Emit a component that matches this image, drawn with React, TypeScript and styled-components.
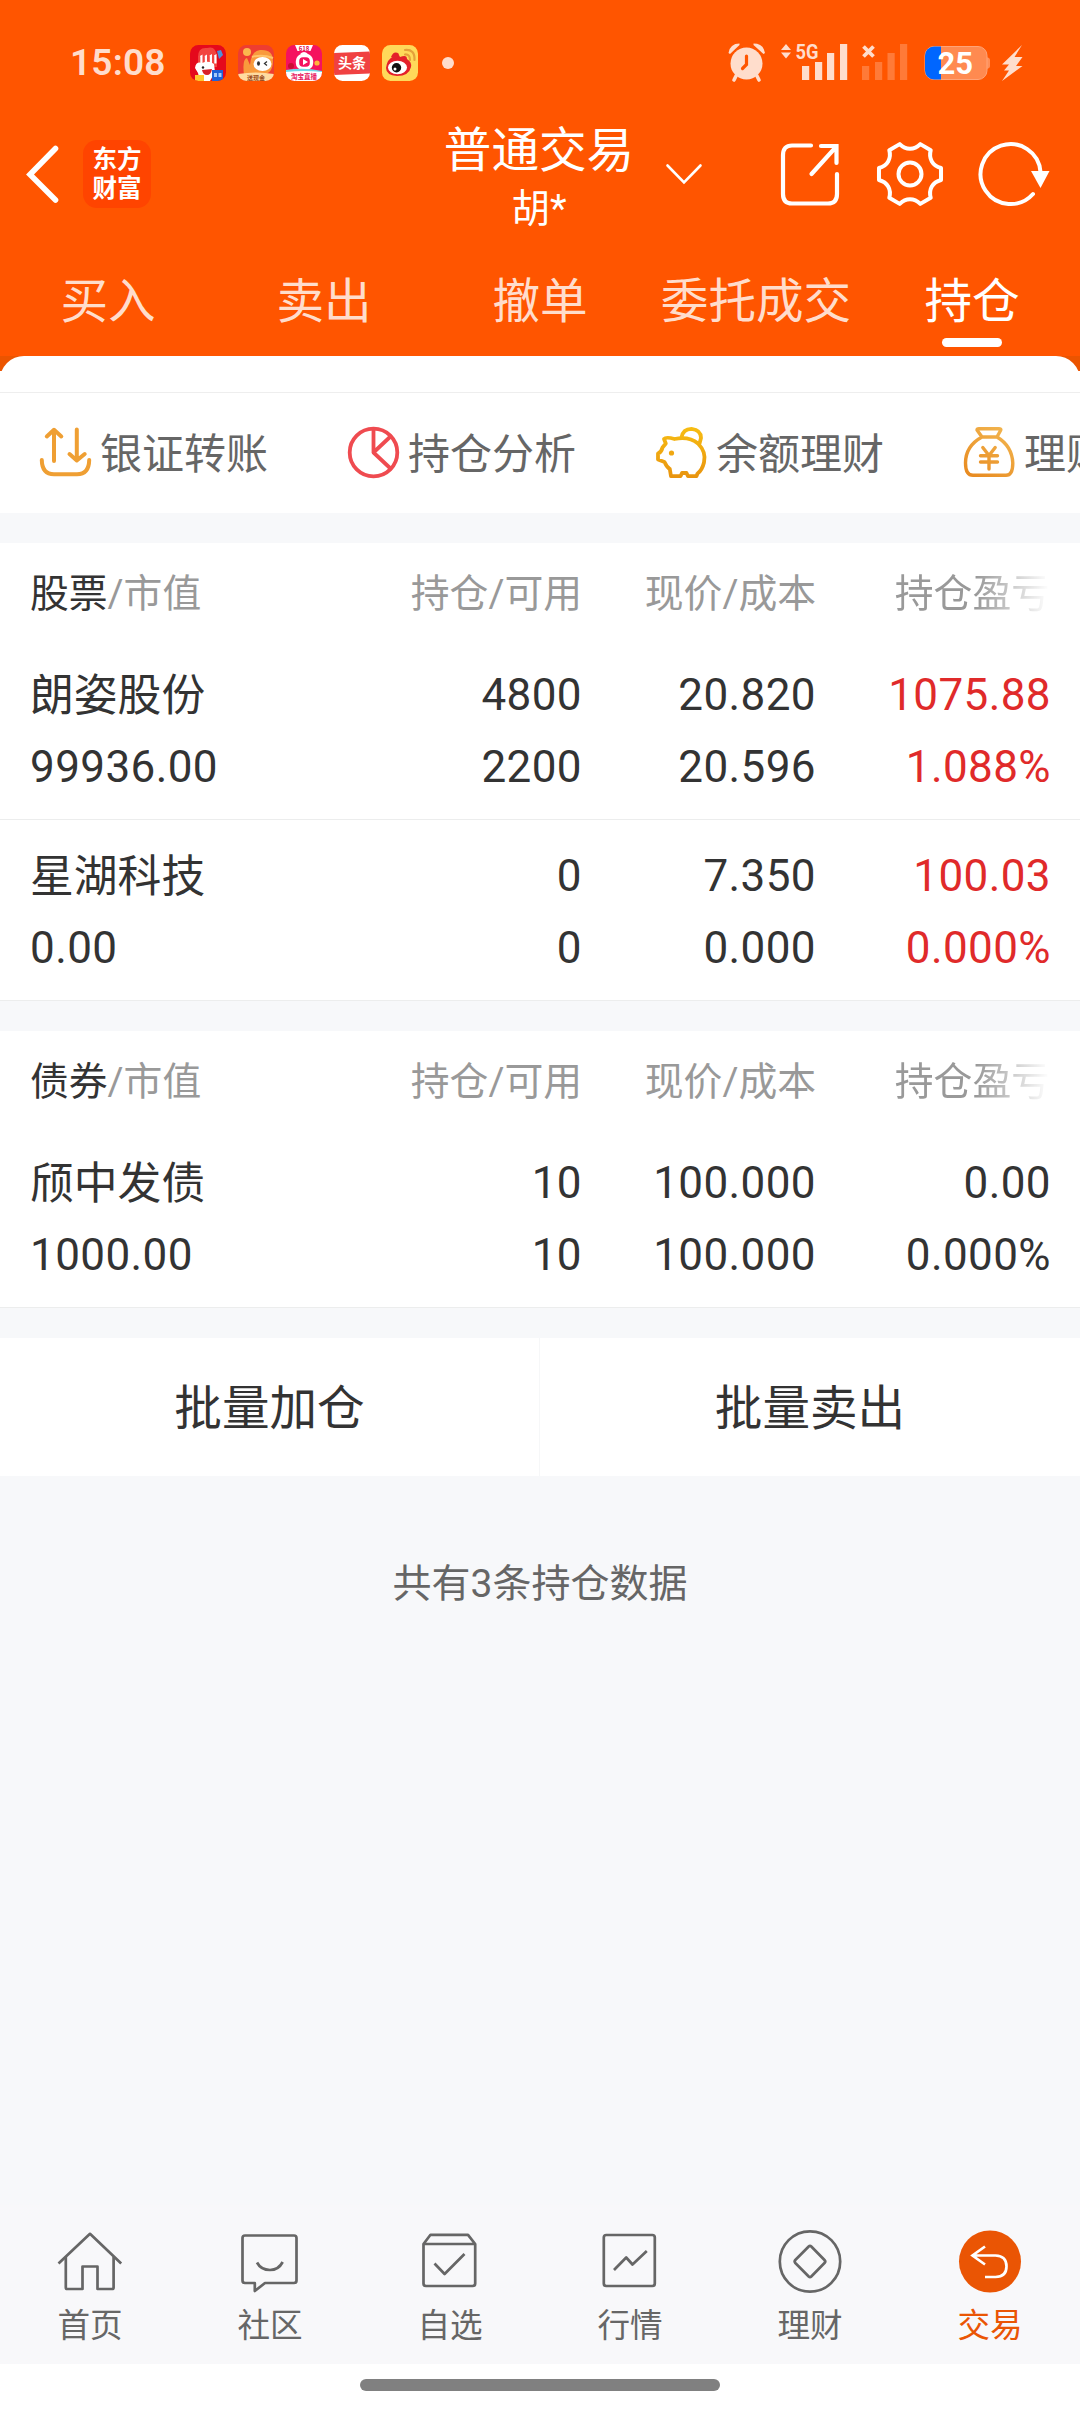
import React from "react";
import styled, { createGlobalStyle } from "styled-components";

const GlobalStyle = createGlobalStyle`
  * { box-sizing: border-box; }
  body {
    margin: 0;
    background: #f7f8fa;
    font-family: Roboto, "Noto Sans CJK SC", sans-serif;
    color: #333;
  }
  svg { display: block; flex: none; overflow: visible; }
`;

const Screen = styled.div`
  width: 1080px;
  height: 2412px;
  display: flex;
  flex-direction: column;
  overflow: hidden;
  background: #f7f8fa;
`;

/* ---------- header ---------- */

const Header = styled.header`
  height: 356px;
  flex: none;
  background: #ff5500;
  color: #fff;
`;

const StatusBar = styled.div`
  height: 124px;
  display: flex;
  align-items: center;
  justify-content: space-between;
  padding: 2px 56px 0 70px;
`;

const StatusGroup = styled.div`
  display: flex;
  align-items: center;
`;

const Clock = styled.span`
  width: 120px;
  font-size: 37px;
  line-height: 40px;
  font-weight: 600;
  letter-spacing: 0.2px;
  color: #ffddcc;
`;

const AppIcons = styled.div`
  display: flex;
  gap: 12px;
`;

const MoreDot = styled.span`
  width: 12px;
  height: 12px;
  margin-left: 24px;
  border-radius: 50%;
  background: #ffddcc;
`;

const TitleBar = styled.div`
  height: 100px;
  display: grid;
  grid-template-columns: 440px 198px 1fr;
  grid-template-rows: 100px;
  align-items: center;
`;

const TitleLeft = styled.div`
  display: flex;
  align-items: center;
  padding-left: 20px;
  gap: 15px;
`;

const BrandBadge = styled.div`
  width: 68px;
  height: 68px;
  border-radius: 14px;
  background: #ff4400;
  display: grid;
  place-content: center;
  font-size: 24.5px;
  line-height: 29px;
  font-weight: 700;
  text-align: center;
`;

const TitleText = styled.div`
  display: flex;
  flex-direction: column;
  align-items: center;
  padding-top: 10px;
`;

const Title = styled.div`
  font-size: 47.6px;
  line-height: 60px;
  white-space: nowrap;
`;

const Account = styled.div`
  font-size: 38.5px;
  line-height: 56px;
`;

const TitleActions = styled.div`
  display: flex;
  align-items: center;
  padding-left: 26px;
`;

const ActionIcons = styled.div`
  display: flex;
  gap: 28px;
  margin-left: 70px;
`;

const Tabs = styled.nav`
  height: 132px;
  display: grid;
  grid-template-columns: repeat(5, 1fr);
`;

const Tab = styled.div<{ $active?: boolean }>`
  display: flex;
  flex-direction: column;
  align-items: center;
  padding-top: 46px;
  font-size: 47.6px;
  line-height: 64px;
  white-space: nowrap;
  color: ${(p) => (p.$active ? "#fff" : "#ffddcc")};

  &::after {
    content: "";
    width: 60px;
    height: 9px;
    margin-top: 4px;
    border-radius: 5px;
    background: ${(p) => (p.$active ? "#fff" : "transparent")};
  }
`;

/* ---------- shortcuts ---------- */

const SheetTop = styled.div`
  height: 37px;
  flex: none;
  background: linear-gradient(#eb5400 15px, #fff 15px);
`;

const SheetEdge = styled.div`
  height: 37px;
  border-radius: 24px 24px 0 0;
  background: #fff;
  border-bottom: 1px solid #eeeeee;
`;

const Shortcuts = styled.div`
  height: 120px;
  flex: none;
  display: flex;
  align-items: center;
  padding-left: 39px;
  overflow: hidden;
  background: #fff;
`;

const Shortcut = styled.div`
  width: 308px;
  flex: none;
  display: flex;
  align-items: center;
  gap: 9px;
  color: #666;
`;

const ShortcutLabel = styled.span`
  padding-top: 4px;
  font-size: 42px;
  line-height: 60px;
  white-space: nowrap;
`;

/* ---------- holdings ---------- */

const Section = styled.section`
  margin-top: 30px;
  flex: none;
  background: #fff;
`;

const columns = `
  display: grid;
  grid-template-columns: 332px 220px 234px 235px;
  padding: 0 29px 0 30px;
`;

const HeadRow = styled.div`
  ${columns}
  height: 96px;
  padding-top: 5px;
  align-items: center;
  font-size: 38.8px;
  line-height: 56px;
  color: #999;
`;

const HeadCell = styled.div<{ $fade?: boolean }>`
  text-align: right;
  white-space: nowrap;
  ${(p) =>
    p.$fade &&
    `
    padding-right: 1px;
    -webkit-mask-image: linear-gradient(to right, #000 160px, transparent 233px);
    mask-image: linear-gradient(to right, #000 160px, transparent 233px);
  `}

  &:first-child { text-align: left; }
`;

const Strong = styled.span`
  color: #333;
`;

const DataRow = styled.div`
  ${columns}
  height: 181px;
  align-items: start;
  padding-top: 20px;
  border-bottom: 1px solid #eceded;
`;

const DataCell = styled.div<{ $red?: boolean }>`
  font-size: 44px;
  line-height: 72px;
  letter-spacing: 0.4px;
  text-align: right;
  white-space: nowrap;
  color: ${(p) => (p.$red ? "#e02a2a" : "#333")};

  &:first-child { text-align: left; }
`;

const Name = styled.div`
  padding-top: 2px;
  font-size: 43.8px;
  line-height: 70px;
  letter-spacing: 0;
`;

const BatchBar = styled.div`
  height: 138px;
  margin-top: 30px;
  flex: none;
  display: grid;
  grid-template-columns: 1fr 1fr;
  background: #fff;
`;

const BatchButton = styled.button`
  border: 0;
  padding: 4px 0 0;
  background: none;
  font: inherit;
  font-size: 47.6px;
  line-height: 134px;
  color: #333;

  &:first-child { border-right: 1px solid #f6f7f8; }
`;

const Summary = styled.div`
  flex: 1;
  padding-top: 78px;
  text-align: center;
  font-size: 39px;
  line-height: 60px;
  color: #666;
`;

/* ---------- bottom navigation ---------- */

const BottomNav = styled.nav`
  height: 159px;
  flex: none;
  display: grid;
  grid-template-columns: repeat(6, 1fr);
  background: #f8f8fa;
`;

const NavItem = styled.div<{ $active?: boolean }>`
  display: flex;
  flex-direction: column;
  align-items: center;
  padding-top: 20px;
  font-size: 32.6px;
  line-height: 58px;
  color: ${(p) => (p.$active ? "#ea5504" : "#666")};
`;

const GestureArea = styled.div`
  height: 48px;
  flex: none;
  padding-top: 15px;
  background: #fff;
`;

const GesturePill = styled.div`
  width: 360px;
  height: 12px;
  margin: 0 auto;
  border-radius: 6px;
  background: #808080;
`;

/* ---------- drawings ---------- */

const AppTile = ({ id, bg, children }: { id: string; bg: string; children: React.ReactNode }) => (
  <svg width="36" height="36" viewBox="0 0 36 36">
    <clipPath id={id}>
      <rect width="36" height="36" rx="8.5" />
    </clipPath>
    <g clipPath={`url(#${id})`}>
      <rect width="36" height="36" fill={bg} />
      {children}
    </g>
  </svg>
);

const tileFont = { fontFamily: '"Noto Sans CJK SC", sans-serif', fontWeight: 700 } as const;

const StatusApps = () => (
  <AppIcons>
    <AppTile id="tile-jd" bg="#e5091c">
      <path d="M8 12 Q8 2 17 3 Q26 0 27 12 L27 22 H8Z" fill="#f2453f" />
      <path d="M27 6 l4 -1 l2 5 l-4 4z" fill="#4f8fd8" />
      <path d="M5 23 Q6 16 12 18 Q19 15 24 19 L25 27 L20 36 H10 L8 28Z" fill="#fff" />
      <path d="M10 11l2.500-1.500v9.500h-2.200v-7zM14.500 11l2.500-1.500v9h-2.200v-7zM19.500 10.500l2.500-1.500v9.500h-2.200v-7zM24 10.500l2.500-1.500v9.500h-2.200v-7z" fill="#fff" />
      <circle cx="13" cy="22.500" r="1.200" fill="#222" />
      <path d="M12 25 l10 -1 q-1 6 -5 6 q-4 0 -5 -5z" fill="#d8202a" />
      <rect x="22" y="25" width="11" height="11" fill="#1f62d8" />
      <path d="M24 28h3v4h-3zM28.500 28h3v4h-3z" fill="#a9cbf7" />
      <rect x="5" y="30" width="9" height="6" fill="#ffc62e" />
    </AppTile>
    <AppTile id="tile-cash" bg="#ee3d31">
      <circle cx="9" cy="7" r="4" fill="#fbb84d" />
      <path d="M6 30 Q4 14 9 13 L12 20 Q13 6 22 5 Q35 4 35 16 Q35 30 22 30Z" fill="#f99a3c" />
      <path d="M14 12 Q24 9 35 13" stroke="#ffc368" strokeWidth="2" fill="none" />
      <ellipse cx="24.500" cy="19" rx="9" ry="7" fill="#fff" />
      <ellipse cx="20.500" cy="18.500" rx="1.500" ry="2.300" fill="#333" />
      <path d="M29 16.500l-2.500 2 2.500 2" stroke="#333" strokeWidth="1.300" fill="none" />
      <path d="M0 29 Q18 26 36 29 V36 H0Z" fill="#ffdba0" />
      <text x="18" y="34.500" fontSize="6" textAnchor="middle" fill="#9a4a1a" {...tileFont}>送现金</text>
    </AppTile>
    <AppTile id="tile-live" bg="#f5125f">
      <path d="M9 0h18l-2.500 6h-13z" fill="#fff" />
      <text x="18" y="5.500" fontSize="6" textAnchor="middle" fill="#e0104f" {...tileFont}>618</text>
      <rect x="11.500" y="10.500" width="14" height="13" rx="5.500" fill="none" stroke="#fff" strokeWidth="3.400" />
      <path d="M17 14l5 3-5 3zM14 9q4 -4 8 0" fill="#fff" />
      <circle cx="5" cy="21" r="3" fill="#c80f35" />
      <circle cx="31" cy="18" r="2.600" fill="#ffb33c" />
      <path d="M0 25 Q18 22 36 26 V28 H0Z" fill="#6fd8e6" />
      <path d="M0 27 Q18 25 36 27 V36 H0Z" fill="#fff" />
      <text x="18" y="34" fontSize="6.500" textAnchor="middle" fill="#e81a62" {...tileFont}>淘宝直播</text>
    </AppTile>
    <AppTile id="tile-news" bg="#ffffff">
      <path d="M0 8 L36 6.500 V28.500 L0 30Z" fill="#f04142" />
      <text x="18" y="23.300" fontSize="14" textAnchor="middle" fill="#fff" {...tileFont}>头条</text>
    </AppTile>
    <AppTile id="tile-weibo" bg="#ffd95a">
      <path d="M4 23 Q5 14 12 11 Q17 8 18 12 Q25 9 25 14 Q30 17 29 22 Q27 31 15 31 Q4 30 4 23Z" fill="#e4202a" />
      <path d="M9 12 Q12 5 17 9 L15 14Z" fill="#e4202a" />
      <ellipse cx="15.500" cy="22.500" rx="9.500" ry="6.800" fill="#fff" />
      <circle cx="14.500" cy="22.800" r="4.700" fill="#111" />
      <circle cx="13" cy="24" r="1.500" fill="#fff" />
      <path d="M23 9.500q5 -0.500 5 5.500M23 5q10 -1 9.500 10" fill="none" stroke="#e5a03a" strokeWidth="2.200" strokeLinecap="round" />
    </AppTile>
  </AppIcons>
);

/* Alarm, two SIM signals, battery with its level, charging bolt. */
const StatusIndicators = () => (
  <svg width="296" height="40" viewBox="728 43 296 40" fill="#ffddcc">
    <circle cx="746.500" cy="63.500" r="16" />
    <path d="M728.500 53 Q730 43.500 739.500 43.500 L739.500 45 L730 54Z M765 53 Q763.500 43.500 753.500 43.500 L753.500 45 L763.500 54Z" />
    <path d="M736 76l-2 4M757 76l2 4" stroke="#ffddcc" strokeWidth="3.600" strokeLinecap="round" />
    <path d="M746.500 56v8.500l-4 4" stroke="#ff5500" strokeWidth="3.200" fill="none" strokeLinecap="round" />
    <path d="M781 50l5-6 5 6zM781 52.500h10l-5 6z" />
    <text x="795.500" y="59" fontSize="21" fontWeight="700" textLength="23" lengthAdjust="spacingAndGlyphs" fontFamily="Roboto, sans-serif">5G</text>
    <path d="M802 66h7.200v14h-7.200zM815 62h7.200v18h-7.200zM827 53h7.200v27h-7.200zM840 44h7.200v36h-7.200z" />
    <path d="M863.500 46.500l10 10M873.500 46.500l-10 10" stroke="#ffddcc" strokeWidth="3.800" />
    <path d="M862 66h7.200v14h-7.200zM875 62h7.200v18h-7.200zM887.500 53h7.200v27h-7.200zM900 44h7.200v36h-7.200z" fill="#ff7a38" />
    <path d="M986 57q4 .5 4 3v6q0 2.500-4 3z" fill="#ff8f58" />
    <rect x="925" y="46.500" width="62" height="33" rx="9" fill="#ff8a50" stroke="#ffa478" />
    <path d="M941 46.500H934a9 9 0 0 0-9 9v15a9 9 0 0 0 9 9h7z" fill="#0066ff" />
    <text x="955.300" y="74.300" fontSize="31" fontWeight="700" textAnchor="middle" fill="#fff" fontFamily="Roboto, sans-serif">25</text>
    <path d="M1022 45L1002 64.500H1009L1004 70.500H1009L1002 81L1022.500 66H1016L1022.500 57H1014.500Z" />
  </svg>
);

const BackIcon = () => (
  <svg width="48" height="64" viewBox="0 0 48 64" fill="none" stroke="#fff" strokeWidth="5.600" strokeLinecap="round" strokeLinejoin="miter">
    <path d="M35.500 6.500L10 32.500L35.500 58" />
  </svg>
);

const ChevronIcon = () => (
  <svg width="40" height="24" viewBox="0 0 40 24" fill="none" stroke="#fff" strokeWidth="2.600" strokeLinecap="round">
    <path d="M3.500 3.500L20 20.500L36.500 3.500" />
  </svg>
);

const ShareIcon = () => (
  <svg width="72" height="72" viewBox="0 0 72 72" fill="none" stroke="#fff" strokeWidth="4.200" strokeLinecap="round">
    <path d="M37 7.500H18Q9 7.500 9 17V56Q9 65.500 18 65.500H54Q63 65.500 63 56V36" />
    <path d="M47 8H62.500V25M61.500 9.500L37.500 36" />
  </svg>
);

const polar = (r: number, deg: number) => {
  const a = (deg * Math.PI) / 180;
  return `${(36 + r * Math.cos(a)).toFixed(2)} ${(36 + r * Math.sin(a)).toFixed(2)}`;
};

const gearPath =
  [0, 60, 120, 180, 240, 300]
    .map((t, i) => `${i ? "L" : "M"}${polar(31.6, t - 11)}L${polar(31.6, t + 11)}C${polar(24, t + 20)} ${polar(24, t + 40)} ${polar(31.6, t + 49)}`)
    .join("") + "Z";

const GearIcon = () => (
  <svg width="72" height="72" viewBox="0 0 72 72" fill="none" stroke="#fff" strokeWidth="4" strokeLinejoin="round">
    <path d={gearPath} />
    <circle cx="36" cy="36" r="11.500" />
  </svg>
);

const RefreshIcon = () => (
  <svg width="76" height="72" viewBox="-1 0 76 72">
    <path d="M58 56A30 30 0 1 1 65.500 34" fill="none" stroke="#fff" strokeWidth="4" strokeLinecap="round" />
    <path d="M56 33H74.500L65.500 50Z" fill="#fff" />
  </svg>
);

const shortcutSvg = { width: 52, height: 52, viewBox: "0 0 52 52", fill: "none", strokeLinecap: "round", strokeLinejoin: "round" } as const;

const TransferIcon = () => (
  <svg {...shortcutSvg} stroke="#ef9f33" strokeWidth="4">
    <path d="M15 34V3M7.800 9.500L15 2.800L22.300 9.500M37.800 2.500V33M30.500 27L37.800 33.500L45.700 27" />
    <path d="M2.800 33Q3 47.200 15 47.200H38Q50 47.200 50.200 33" />
  </svg>
);

const PieIcon = () => (
  <svg {...shortcutSvg} stroke="#ef4b50" strokeWidth="3.800">
    <circle cx="26.500" cy="25.500" r="23.800" />
    <path d="M26.500 2V25.500L43.500 9.500M26.500 25.500L43.500 41.500" />
  </svg>
);

const PiggyIcon = () => (
  <svg {...shortcutSvg} stroke="url(#piggy)" strokeWidth="3.800">
    <linearGradient id="piggy" x1="0" y1="0" x2="0" y2="52" gradientUnits="userSpaceOnUse">
      <stop offset="0" stopColor="#f7bd12" />
      <stop offset="1" stopColor="#e8930f" />
    </linearGradient>
    <path d="M9 12Q11 9.500 19.500 12Q34 9 43 16.500Q51.500 25 49 35.500Q47 43.500 42.500 46.500L41.500 49.200H33L31.500 46H27L25.500 49.200H16L14.800 42Q12 40.500 9.500 35L3 32.500V26.500Q6.500 25 7.500 20.500L10.800 16.500Z" />
    <path d="M26.500 10.500Q28 2 36.500 1.900Q46 3 46 11L44.500 16.500" />
    <circle cx="16.500" cy="26" r="2.600" fill="#f0a711" stroke="none" />
  </svg>
);

const MoneyBagIcon = () => (
  <svg {...shortcutSvg} stroke="url(#bag)" strokeWidth="3.400">
    <linearGradient id="bag" x1="45" y1="0" x2="10" y2="52" gradientUnits="userSpaceOnUse">
      <stop offset="0" stopColor="#f2b650" />
      <stop offset="1" stopColor="#e88a20" />
    </linearGradient>
    <path d="M19 10L14 3Q14 1.700 16 1.700H36Q38.300 1.700 37.800 3L34 10M19 10Q2.500 19 2.500 36Q2.500 48.300 10 48.300H43Q49.800 48.300 49.800 36Q49 19 34 10Z" />
    <path d="M19.800 20.500L26 28.500L32.200 20.500M17.500 28.800H34.500M17.500 35H34.500M26 29V42" />
  </svg>
);

const navSvg = { width: 72, height: 72, viewBox: "0 0 72 72", fill: "none", stroke: "#666", strokeWidth: 2.7, strokeLinejoin: "round" } as const;

const HomeIcon = () => (
  <svg {...navSvg}>
    <path d="M4.500 38.500L36 8.800L67.200 38.500" />
    <path d="M11.800 32V62.500Q11.800 64 13.300 64H28.500V41.500H43.500V64H58Q59.600 64 59.600 62.500V32" />
  </svg>
);

const CommunityIcon = () => (
  <svg {...navSvg}>
    <path d="M11 10.500H60Q62.500 10.500 62.500 13V55.500Q62.500 58 60 58H31L20.800 66V58H11Q8.500 58 8.500 55.500V13Q8.500 10.500 11 10.500Z" />
    <path d="M23 37.500Q27 45 36 45Q44.500 45 48.700 37" />
  </svg>
);

const WatchlistIcon = () => (
  <svg {...navSvg}>
    <path d="M9.500 19L16.500 9.800H54L61.200 19V58.500Q61.200 61 58.500 61H12Q9.500 61 9.500 58.500V19H61" />
    <path d="M20.500 38.500L30.600 49L50.500 29" />
  </svg>
);

const MarketIcon = () => (
  <svg {...navSvg}>
    <rect x="9.800" y="10" width="51" height="51" rx="2.500" />
    <path d="M20 45L32.200 32.500L38.500 39.500L52.800 26" />
  </svg>
);

const WealthIcon = () => (
  <svg {...navSvg}>
    <circle cx="36" cy="36.500" r="30.200" />
    <path d="M37.300 21.500L50.500 35Q52 36.500 50.500 38L37.300 51.500Q36 52.800 34.700 51.500L21.300 38Q20 36.500 21.300 35L34.700 21.500Q36 20.200 37.300 21.500Z" />
  </svg>
);

const TradeIcon = () => (
  <svg {...navSvg} stroke="#fff" strokeLinejoin="miter">
    <circle cx="36" cy="36.500" r="31" fill="#ea5504" stroke="none" />
    <path d="M31 21.500L18.500 30.500L31 39.500M19 30.500H41.500Q52.500 31 52.500 41.300Q52.500 52 41.500 52H31" />
  </svg>
);

/* ---------- data ---------- */

const tabs = ["买入", "卖出", "撤单", "委托成交", "持仓"];

const shortcuts = [
  { label: "银证转账", Icon: TransferIcon },
  { label: "持仓分析", Icon: PieIcon },
  { label: "余额理财", Icon: PiggyIcon },
  { label: "理财", Icon: MoneyBagIcon },
];

interface Holding {
  name: string;
  value: string;
  amount: [string, string];
  price: [string, string];
  profit: [string, string];
  up?: boolean;
}

const sections: { kind: string; rows: Holding[] }[] = [
  {
    kind: "股票",
    rows: [
      { name: "朗姿股份", value: "99936.00", amount: ["4800", "2200"], price: ["20.820", "20.596"], profit: ["1075.88", "1.088%"], up: true },
      { name: "星湖科技", value: "0.00", amount: ["0", "0"], price: ["7.350", "0.000"], profit: ["100.03", "0.000%"], up: true },
    ],
  },
  {
    kind: "债券",
    rows: [
      { name: "颀中发债", value: "1000.00", amount: ["10", "10"], price: ["100.000", "100.000"], profit: ["0.00", "0.000%"] },
    ],
  },
];

const navItems = [
  { label: "首页", Icon: HomeIcon },
  { label: "社区", Icon: CommunityIcon },
  { label: "自选", Icon: WatchlistIcon },
  { label: "行情", Icon: MarketIcon },
  { label: "理财", Icon: WealthIcon },
  { label: "交易", Icon: TradeIcon },
];

const Pair = ({ values, red }: { values: [string, string]; red?: boolean }) => (
  <DataCell $red={red}>
    <div>{values[0]}</div>
    <div>{values[1]}</div>
  </DataCell>
);

export default function App() {
  return (
    <Screen>
      <GlobalStyle />
      <Header>
        <StatusBar>
          <StatusGroup>
            <Clock>15:08</Clock>
            <StatusApps />
            <MoreDot />
          </StatusGroup>
          <StatusIndicators />
        </StatusBar>
        <TitleBar>
          <TitleLeft>
            <BackIcon />
            <BrandBadge>
              <span>东方</span>
              <span>财富</span>
            </BrandBadge>
          </TitleLeft>
          <TitleText>
            <Title>普通交易</Title>
            <Account>胡*</Account>
          </TitleText>
          <TitleActions>
            <ChevronIcon />
            <ActionIcons>
              <ShareIcon />
              <GearIcon />
              <RefreshIcon />
            </ActionIcons>
          </TitleActions>
        </TitleBar>
        <Tabs>
          {tabs.map((t) => (
            <Tab key={t} $active={t === "持仓"}>{t}</Tab>
          ))}
        </Tabs>
      </Header>

      <SheetTop>
        <SheetEdge />
      </SheetTop>
      <Shortcuts>
        {shortcuts.map(({ label, Icon }) => (
          <Shortcut key={label}>
            <Icon />
            <ShortcutLabel>{label}</ShortcutLabel>
          </Shortcut>
        ))}
      </Shortcuts>

      {sections.map((s) => (
        <Section key={s.kind}>
          <HeadRow>
            <HeadCell><Strong>{s.kind}</Strong>/市值</HeadCell>
            <HeadCell>持仓/可用</HeadCell>
            <HeadCell>现价/成本</HeadCell>
            <HeadCell $fade>持仓盈亏</HeadCell>
          </HeadRow>
          {s.rows.map((r) => (
            <DataRow key={r.name}>
              <DataCell>
                <Name>{r.name}</Name>
                <div>{r.value}</div>
              </DataCell>
              <Pair values={r.amount} />
              <Pair values={r.price} />
              <Pair values={r.profit} red={r.up} />
            </DataRow>
          ))}
        </Section>
      ))}

      <BatchBar>
        <BatchButton>批量加仓</BatchButton>
        <BatchButton>批量卖出</BatchButton>
      </BatchBar>
      <Summary>共有3条持仓数据</Summary>

      <BottomNav>
        {navItems.map(({ label, Icon }) => (
          <NavItem key={label} $active={label === "交易"}>
            <Icon />
            <span>{label}</span>
          </NavItem>
        ))}
      </BottomNav>
      <GestureArea>
        <GesturePill />
      </GestureArea>
    </Screen>
  );
}
